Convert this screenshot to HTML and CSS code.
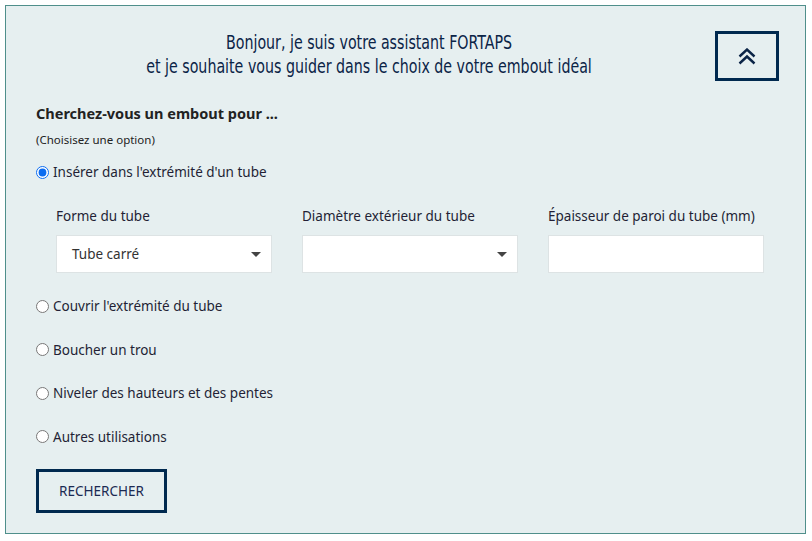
FILE: index.html
```html
<!DOCTYPE html>
<html lang="fr">
<head>
<meta charset="utf-8">
<title>Assistant FORTAPS</title>
<link rel="stylesheet" href="styles.css">
</head>
<body>
<div class="panel">
  <div class="header">
    <div class="title-wrap">
      <h1 class="title">Bonjour, je suis votre assistant FORTAPS<br>et je souhaite vous guider dans le choix de votre embout idéal</h1>
    </div>
    <button class="toggle" type="button" aria-label="Réduire">
      <svg width="18" height="17" viewBox="0 0 18 17"><polyline points="1.5,8.5 9,1.5 16.5,8.5" fill="none" stroke="#0b2447" stroke-width="2.4"/><polyline points="1.5,15.5 9,8.5 16.5,15.5" fill="none" stroke="#0b2447" stroke-width="2.4"/></svg>
    </button>
  </div>
  <div class="content">
    <h2 class="question">Cherchez-vous un embout pour ...</h2>
    <p class="hint">(Choisisez une option)</p>
    <label class="option first"><input type="radio" name="u" checked> Insérer dans l'extrémité d'un tube</label>
    <div class="fields">
      <div class="field">
        <div class="flabel">Forme du tube</div>
        <div class="select"><span>Tube carré</span><i class="caret"></i></div>
      </div>
      <div class="field">
        <div class="flabel">Diamètre extérieur du tube</div>
        <div class="select"><span></span><i class="caret"></i></div>
      </div>
      <div class="field">
        <div class="flabel">Épaisseur de paroi du tube (mm)</div>
        <div class="input"></div>
      </div>
    </div>
    <label class="option"><input type="radio" name="u"> Couvrir l'extrémité du tube</label>
    <label class="option"><input type="radio" name="u"> Boucher un trou</label>
    <label class="option"><input type="radio" name="u"> Niveler des hauteurs et des pentes</label>
    <label class="option"><input type="radio" name="u"> Autres utilisations</label>
    <button class="search" type="button">RECHERCHER</button>
  </div>
</div>
</body>
</html>
```
FILE: styles.css
```css
html, body { margin: 0; padding: 0; background: #ffffff; }
body { padding: 5px 6px 0 5px; font-family: "Noto Sans", "DejaVu Sans", sans-serif; color: #222; }
.panel {
  border: 1px solid #4f8f8b;
  background: #e6eff0;
  height: 527px;
  box-sizing: content-box;
}
.header {
  display: flex;
  align-items: center;
  padding: 25px 26px 0 30px;
}
.title-wrap {
  flex: 1;
  display: flex;
  justify-content: center;
  padding-right: 12px;
}
.title {
  margin: 0;
  text-align: center;
  font-family: "Liberation Sans Narrow", "DejaVu Sans Condensed", sans-serif;
  font-weight: normal;
  font-size: 20px;
  line-height: 24px;
  color: #0b2447;
  white-space: nowrap;
  transform: scaleX(0.79);
  margin-top: -5px;
}
.toggle {
  width: 64px;
  height: 50px;
  border: 3px solid #00294f;
  background: transparent;
  padding: 0;
  display: flex;
  align-items: center;
  justify-content: center;
  box-sizing: border-box;
}
.toggle svg { display: block; margin-top: 1px; }
.content { padding: 0 30px 0 30px; }
.question {
  margin: 22px 0 0 0;
  font-size: 14.5px;
  line-height: 20px;
  font-weight: bold;
  color: #222;
}
.hint {
  margin: 9px 0 0 0;
  font-size: 11.5px;
  line-height: 16px;
  color: #222;
}
.option {
  display: flex;
  align-items: center;
  font-size: 13.5px;
  line-height: 20px;
  margin-top: 23.5px;
  color: #231f35;
}
.option.first { margin-top: 14px; }
.option input {
  margin: 0 4px 0 0;
  width: 13px;
  height: 13px;
  accent-color: #0b6cf0;
}
.fields {
  display: grid;
  grid-template-columns: 216px 216px 216px;
  column-gap: 30px;
  padding-left: 20px;
  margin-top: 24px;
}
.flabel {
  font-size: 13.5px;
  line-height: 20px;
  color: #231f35;
}
.select, .input {
  margin-top: 9px;
  height: 38px;
  background: #fff;
  border: 1px solid #dde3e4;
  box-sizing: border-box;
  display: flex;
  align-items: center;
  justify-content: space-between;
  padding: 0 10px 0 15px;
  font-size: 13.5px;
  color: #333;
}
.caret {
  width: 0; height: 0;
  border-left: 5px solid transparent;
  border-right: 5px solid transparent;
  border-top: 5px solid #444;
}
.fields + .option { margin-top: 23px; }
.search {
  margin-top: 22px;
  width: 131px;
  height: 44px;
  border: 3px solid #00294f;
  background: transparent;
  font-family: "Noto Sans", "DejaVu Sans", sans-serif;
  font-size: 13.5px;
  color: #1b2a52;
  padding: 0;
  box-sizing: border-box;
  display: block;
}
```
